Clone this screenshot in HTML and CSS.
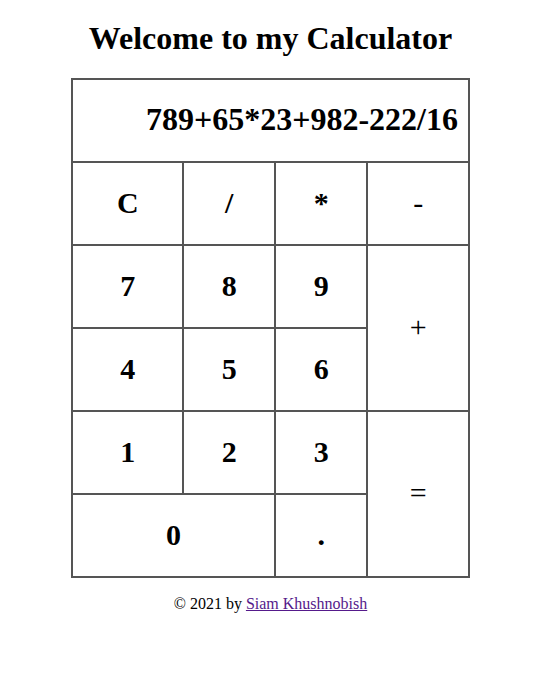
FILE: index.html
```html
<!DOCTYPE html>
<html lang="en">
<head>
  <meta charset="UTF-8" />
  <meta name="viewport" content="width=device-width, initial-scale=1.0" />
  <title>Calculator</title>
  <link rel="stylesheet" href="styles.css">
</head>
<body>
  <div class="wrapper">
    <h1>Welcome to my Calculator</h1>
    <table class="calc">
      <tr>
        <td colspan="4" class="display">789+65*23+982-222/16</td>
      </tr>
      <tr>
        <td class="col1">C</td>
        <td class="col2">/</td>
        <td class="col3">*</td>
        <td class="col4 op">-</td>
      </tr>
      <tr>
        <td>7</td>
        <td>8</td>
        <td>9</td>
        <td rowspan="2" class="op">+</td>
      </tr>
      <tr>
        <td>4</td>
        <td>5</td>
        <td>6</td>
      </tr>
      <tr>
        <td>1</td>
        <td>2</td>
        <td>3</td>
        <td rowspan="2" class="op">=</td>
      </tr>
      <tr>
        <td colspan="2">0</td>
        <td>.</td>
      </tr>
    </table>
    <p class="footer">&copy; 2021 by <a href="#" class="author">Siam Khushnobish</a></p>
  </div>
</body>
</html>
```

FILE: styles.css
```css
body {
  margin: 0;
  font-family: 'Liberation Serif', 'Times New Roman', serif;
  color: #000;
  background: #fff;
}
.wrapper {
  width: 541px;
  padding-top: 20px;
}
h1 {
  margin: 0 0 21px;
  font-size: 32px;
  text-align: center;
}
.calc {
  margin: 0 auto;
  width: 399px;
  border-collapse: collapse;
  border: 2px solid #555;
}
.calc td {
  border: 2px solid #555;
  height: 79px;
  padding: 0 0 2px;
  text-align: center;
  font-size: 30px;
  font-weight: bold;
}
.calc td.display {
  height: 79px;
  text-align: right;
  padding-right: 10px;
  font-size: 32px;
}
.calc td.op {
  font-weight: normal;
}
.col1 { width: 110px; }
.col2 { width: 90px; }
.col3 { width: 91px; }
.col4 { width: 100px; }
.footer {
  margin: 17px 0 0;
  text-align: center;
  font-size: 16px;
}
.author {
  color: #551a8b;
}
```
